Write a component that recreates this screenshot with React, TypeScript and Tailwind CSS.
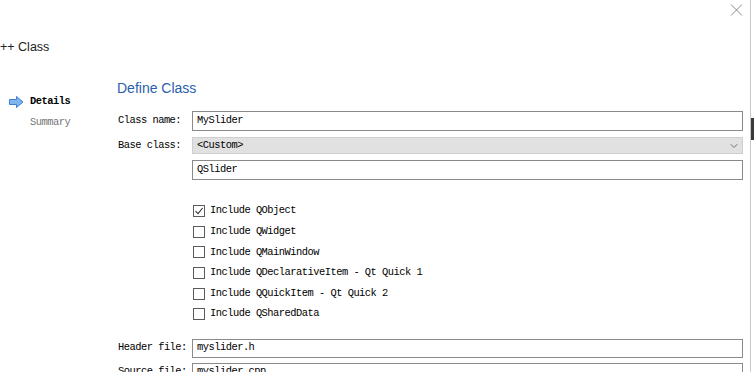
import { ChevronDown } from "lucide-react";

const mono = "font-['Liberation_Mono','DejaVu_Sans_Mono',monospace] text-[10.4px] tracking-[-0.5px]";
const sans = "font-['Liberation_Sans',Arial,sans-serif]";

const includes = [
  { label: "Include QObject", checked: true },
  { label: "Include QWidget", checked: false },
  { label: "Include QMainWindow", checked: false },
  { label: "Include QDeclarativeItem - Qt Quick 1", checked: false },
  { label: "Include QQuickItem - Qt Quick 2", checked: false },
  { label: "Include QSharedData", checked: false },
];

function StepArrow() {
  return (
    <svg width="15" height="12" viewBox="0 0 15 12" aria-hidden>
      <polygon
        points="0.5,3.5 7.5,3.5 7.5,0.5 14,6 7.5,11.5 7.5,8.5 0.5,8.5"
        fill="#7fb6ee"
        stroke="#3c7fd6"
        strokeWidth="1"
        strokeLinejoin="round"
      />
    </svg>
  );
}

function CheckBox({ checked }: { checked: boolean }) {
  return (
    <span className="size-[12px] border border-[#5a5a5a] bg-white flex items-center justify-center shrink-0">
      {checked && (
        <svg width="10" height="10" viewBox="0 0 10 10" aria-hidden>
          <path d="M1.5 5.2 L4 7.6 L8.6 2" fill="none" stroke="#333" strokeWidth="1.1" />
        </svg>
      )}
    </span>
  );
}

function Field({ label, value, className = "" }: { label: string; value: string; className?: string }) {
  return (
    <div className={`flex items-center ${className}`}>
      <span className={`w-[75px] pl-[1px] shrink-0 ${mono} text-black`}>{label}</span>
      <div className={`flex-1 h-full border border-[#8a8a8a] bg-white flex items-center pl-[4px] ${mono} text-black`}>
        {value}
      </div>
    </div>
  );
}

export default function App() {
  return (
    <div className="w-[754px] h-[372px] overflow-hidden bg-white flex">
      <div className="w-[750px] h-full flex flex-col">
        {/* Title bar */}
        <div className="h-[20px] flex justify-end pr-[7px] pt-[4px] shrink-0">
          <svg width="13" height="12" viewBox="0 0 13 12" aria-hidden>
            <path d="M1 0.5 L12 11.5 M12 0.5 L1 11.5" stroke="#8a8a8a" strokeWidth="1" />
          </svg>
        </div>
        <div className={`mt-[19px] leading-[16px] text-[12.5px] text-[#222] ${sans} shrink-0`}>++ Class</div>

        <div className="mt-[23px] flex flex-1">
          {/* Wizard steps */}
          <div className="w-[117px] shrink-0 pl-[9px] pt-[13px] flex flex-col">
            <div className="h-[21px] flex items-center gap-[6px]">
              <StepArrow />
              <span className={`${mono} font-bold text-black`}>Details</span>
            </div>
            <div className="h-[21px] flex items-center pl-[21px]">
              <span className={`${mono} text-[#777]`}>Summary</span>
            </div>
          </div>

          {/* Page */}
          <div className="flex-1 pr-[7px] flex flex-col">
            <h2 className={`h-[20px] leading-[20px] text-[14px] text-[#2a60ab] ${sans}`}>Define Class</h2>

            <Field label="Class name:" value="MySlider" className="mt-[13px] h-[20px]" />

            <div className="mt-[6px] h-[17px] flex items-center">
              <span className={`w-[75px] pl-[1px] shrink-0 ${mono} text-black`}>Base class:</span>
              <div className={`flex-1 h-full border border-[#cfcfcf] bg-[#e1e1e1] flex items-center justify-between pl-[4px] pr-[2px] ${mono} text-black`}>
                <span>&lt;Custom&gt;</span>
                <ChevronDown className="size-[12px] text-[#555]" strokeWidth={1.6} />
              </div>
            </div>

            <Field label="" value="QSlider" className="mt-[6px] h-[20px]" />

            <div className="mt-[21px] flex flex-col">
              {includes.map((item) => (
                <div key={item.label} className="h-[20.6px] flex items-center pl-[76px] gap-[5px]">
                  <CheckBox checked={item.checked} />
                  <span className={`${mono} text-black`}>{item.label}</span>
                </div>
              ))}
            </div>

            <Field label="Header file:" value="myslider.h" className="mt-[14px] h-[19px]" />
            <Field label="Source file:" value="myslider.cpp" className="mt-[5px] h-[19px]" />
          </div>
        </div>
      </div>

      {/* Right window edge */}
      <div className="w-[4px] h-full border-l border-[#c8c8c8] flex flex-col">
        <div className="mt-[118px] h-[22px] w-[3px] bg-[#3a3a3a]" />
      </div>
    </div>
  );
}
